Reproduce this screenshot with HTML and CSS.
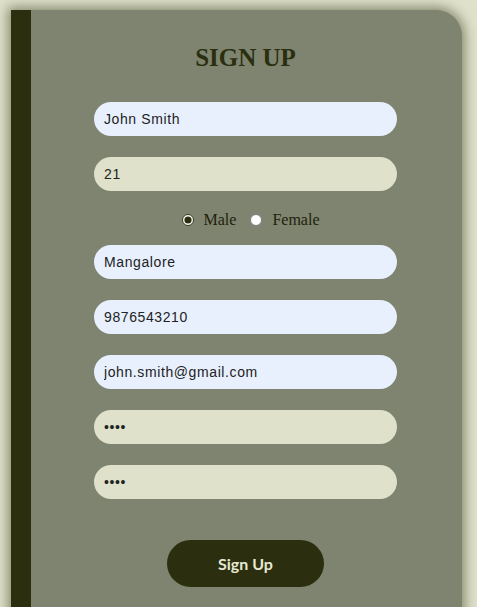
FILE: index.html
```html
<!DOCTYPE html>
<html lang="en">

<head>
  <meta charset="UTF-8" />
  <meta name="viewport" content="width=device-width, initial-scale=1.0" />
  <title>Sign Up</title>
  <link rel="stylesheet" href="styles.css">
</head>

<body>

  <div class="signup-card">
    <h1 class="signup-title">SIGN UP</h1>

    <form class="signup-form">
      <input class="field filled" type="text" value="John Smith" />
      <input class="field" type="text" value="21" />

      <!-- gender -->
      <div class="gender">
        <label><input type="radio" name="gender" checked /> Male</label>
        <label><input type="radio" name="gender" /> Female</label>
      </div>

      <input class="field filled" type="text" value="Mangalore" />
      <input class="field filled" type="text" value="9876543210" />
      <input class="field filled" type="email" value="john.smith@gmail.com" />
      <input class="field" type="password" value="abcd" />
      <input class="field" type="password" value="abcd" />

      <button class="signup-btn" type="button">Sign Up</button>
    </form>
  </div>

</body>

</html>
```

FILE: styles.css
```css
* {
  margin: 0;
  padding: 0;
  box-sizing: border-box;
}

body {
  background-color: #dfe1cb;
  padding: 10px 0 0 11px;
  overflow: hidden;
  font-family: "Liberation Serif", serif;
}

.signup-card {
  width: 451px;
  height: 640px;
  background-color: #7e8470;
  border-left: 20px solid #2b2f0f;
  border-radius: 0 26px 0 0;
  box-shadow: 0 0 12px 3px rgba(60, 64, 30, 0.55);
  padding: 34px 2px 0 0;
}

.signup-title {
  text-align: center;
  font-family: "Liberation Serif", serif;
  font-size: 25px;
  line-height: 28px;
  font-weight: bold;
  color: #2b2f0f;
  margin-bottom: 30px;
}

.signup-form {
  display: flex;
  flex-direction: column;
  align-items: center;
  gap: 21px;
}

.field {
  width: 303px;
  height: 34px;
  border: none;
  border-radius: 17px;
  padding: 0 10px;
  background-color: #dfe1cb;
  color: #222;
  font-family: "Liberation Sans", Arial, sans-serif;
  font-size: 14px;
  letter-spacing: 0.6px;
  outline: none;
}

.field.filled {
  background-color: #e8f0fe;
}

.gender {
  height: 20px;
  margin: -2px 0 -6px 10px;
  display: flex;
  align-items: center;
  gap: 14px;
  font-size: 16px;
  color: #1f220a;
}

.gender label {
  display: flex;
  align-items: center;
}

.gender input {
  width: 12px;
  height: 12px;
  margin: 0 10px 0 0;
  accent-color: #2b2f0f;
}

.signup-btn {
  margin-top: 20px;
  width: 157px;
  height: 47px;
  border: none;
  border-radius: 24px;
  background-color: #2b2f0f;
  color: #e6e8d2;
  font-family: Lato, "Open Sans", sans-serif;
  font-weight: bold;
  font-size: 16px;
  cursor: pointer;
}
```
